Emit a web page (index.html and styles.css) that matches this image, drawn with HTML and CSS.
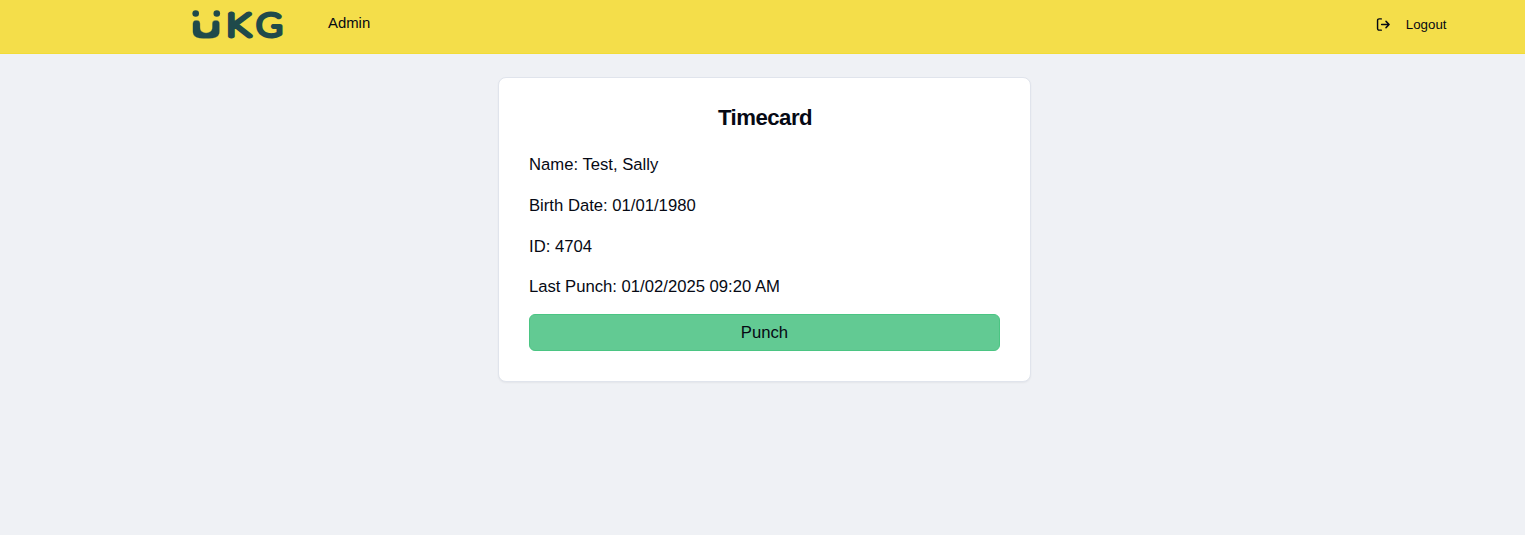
FILE: index.html
```html
<!DOCTYPE html>
<html lang="en">
<head>
<meta charset="utf-8">
<title>Timecard</title>
<link rel="stylesheet" href="styles.css">
</head>
<body>
<header class="topbar">
  <svg class="logo" width="96" height="48" viewBox="190 0 96 48" role="img" aria-label="UKG">
    <!-- thickens a hairline letter and rounds its ends -->
    <filter id="thicken" filterUnits="userSpaceOnUse" x="190" y="14" width="34" height="30" color-interpolation-filters="sRGB">
      <feMorphology operator="dilate" radius="2"/>
      <feGaussianBlur stdDeviation="1.4"/>
      <feComponentTransfer><feFuncA type="linear" slope="3.200" intercept="-1"/></feComponentTransfer>
    </filter>
    <circle cx="195.700" cy="13.500" r="3.300"/>
    <circle cx="216.800" cy="13.500" r="3.300"/>
    <g filter="url(#thicken)"><text class="mark mark-u" transform="translate(192 35.700) scale(2.250 1)">U</text></g>
    <text class="mark" transform="translate(226.600 35.600) scale(1.260 1)">K</text>
    <text class="mark" transform="translate(256.500 35.600) scale(1.120 1)">G</text>
  </svg>
  <nav class="nav"><a class="nav-link">Admin</a></nav>
  <button class="logout">
    <svg class="logout-icon" width="15" height="15" viewBox="0 0 24 24">
      <path d="M8.500 21H5a2.500 2.500 0 0 1-2.500-2.500V5.500A2.500 2.500 0 0 1 5 3h3.500"/>
      <path d="M16 17l5-5-5-5M21 12H9"/>
    </svg>
    <span>Logout</span>
  </button>
</header>
<main class="page">
  <section class="card">
    <h1 class="title">Timecard</h1>
    <p class="row">Name: Test, Sally</p>
    <p class="row">Birth Date: 01/01/1980</p>
    <p class="row">ID: 4704</p>
    <p class="row">Last Punch: 01/02/2025 09:20 AM</p>
    <button class="punch">Punch</button>
  </section>
</main>
</body>
</html>
```
FILE: styles.css
```css
* { box-sizing: border-box; }
body {
  margin: 0;
  min-height: 100vh;
  background: #eff1f5;
  color: #060914;
  font-family: "Liberation Sans", Arial, sans-serif;
}
button { font-family: inherit; color: inherit; }
.topbar {
  display: flex;
  align-items: center;
  height: 54px;
  padding: 0 78.5px 5px 190px;
  background: #f4de4a;
  border-bottom: 1px solid #f2dc38;
}
.logo { display: block; fill: #1f4a4b; }
.mark {
  font-family: Lato, sans-serif;
  font-weight: 100;
  font-size: 31px;
  stroke: #1f4a4b;
  stroke-width: 5px;
  stroke-linejoin: round;
  stroke-linecap: round;
}
.mark-u { font-size: 17.5px; stroke-width: 1.1px; }
.nav { flex: 1; padding: 0 0 2px 42px; }
.nav-link { font-size: 14.9px; }
.logout {
  display: flex;
  align-items: center;
  gap: 14.5px;
  padding: 0;
  border: 0;
  background: none;
  font-size: 13.3px;
}
.logout-icon {
  fill: none;
  stroke: currentColor;
  stroke-width: 2.3;
  stroke-linecap: round;
  stroke-linejoin: round;
}
.page { display: flex; justify-content: center; padding: 23px 0 0 4px; }
.card {
  display: flex;
  flex-direction: column;
  width: 533px;
  height: 305px;
  padding: 25px 30px 29px;
  border: 1px solid #e0e4ec;
  border-radius: 8px;
  background: #fff;
  box-shadow: 0 1px 2px rgba(0, 0, 0, .05);
}
.title {
  margin: 0 0 19px;
  padding-left: 1px;
  font-size: 22.2px;
  line-height: 30px;
  letter-spacing: -.023em;
  text-align: center;
}
.row { margin: 0 0 14.75px; font-size: 16.67px; line-height: 26px; }
.punch {
  height: 37px;
  margin-top: -1px;
  padding: 0;
  border: 1px solid #4bc583;
  border-radius: 6px;
  background: #62ca93;
  font-size: 16.7px;
}
```
